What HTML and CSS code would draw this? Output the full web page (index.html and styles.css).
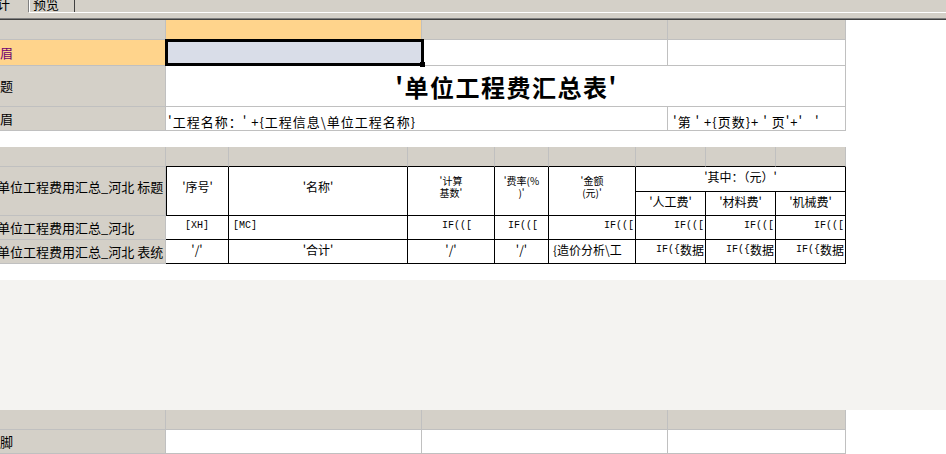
FILE: index.html
```html
<!DOCTYPE html>
<html lang="zh-CN">
<head>
<meta charset="utf-8">
<title>单位工程费汇总表</title>
<link rel="stylesheet" href="styles.css">
</head>
<body>
<div class="tabs">
  <div class="tab tab-active"><span class="tab-label tab-label-cut">计</span></div>
  <div class="tab tab-idle"><span class="tab-label">预览</span></div>
  <div class="tab-rest"></div>
</div>
<div class="rule">
  <div class="rule-hl"></div>
  <div class="rule-sp"></div>
  <div class="rule-d1"></div>
  <div class="rule-d2"></div>
</div>

<div class="band">
  <div class="grid g1">
    <div class="rh hd"></div>
    <div class="ch ch-sel"></div>
    <div class="ch"></div>
    <div class="ch"></div>

    <div class="rh rh-sel">眉</div>
    <div class="c c-sel"></div>
    <div class="c"></div>
    <div class="c"></div>

    <div class="rh">题</div>
    <div class="c c-title">'单位工程费汇总表'</div>

    <div class="rh">眉</div>
    <div class="c c-text span2">'工程名称：' +{工程信息\单位工程名称}</div>
    <div class="c c-text c-page">'第 ' +{页数}+ ' 页'+'   '</div>

    <div class="selbox"><span class="handle"></span></div>
  </div>
</div>

<div class="gap"></div>

<div class="band">
  <div class="grid g2">
    <div class="rh hd"></div>
    <div class="ch"></div>
    <div class="ch"></div>
    <div class="ch"></div>
    <div class="ch"></div>
    <div class="ch"></div>
    <div class="ch"></div>
    <div class="ch"></div>
    <div class="ch"></div>

    <div class="rh rh-cut rspan2 rh-top">单位工程费用汇总_河北 标题</div>
    <div class="d tall rspan2">'序号'</div>
    <div class="d tall rspan2">'名称'</div>
    <div class="d tall rspan2 two">'计算<br>基数'</div>
    <div class="d tall rspan2 two">'费率(%<br>)'</div>
    <div class="d tall rspan2 two">'金额<br>(元)'</div>
    <div class="d span3">'其中：（元）'</div>
    <div class="d">'人工费'</div>
    <div class="d">'材料费'</div>
    <div class="d">'机械费'</div>

    <div class="rh rh-cut">单位工程费用汇总_河北</div>
    <div class="d"><span class="a">[XH]</span></div>
    <div class="d al"><span class="a">[MC]</span></div>
    <div class="d ar pr22"><span class="a">IF(([</span></div>
    <div class="d ar pr10"><span class="a">IF(([</span></div>
    <div class="d ar"><span class="a">IF(([</span></div>
    <div class="d ar"><span class="a">IF(([</span></div>
    <div class="d ar"><span class="a">IF(([</span></div>
    <div class="d ar"><span class="a">IF(([</span></div>

    <div class="rh rh-cut">单位工程费用汇总_河北 表统</div>
    <div class="d">'/'</div>
    <div class="d">'合计'</div>
    <div class="d">'/'</div>
    <div class="d">'/'</div>
    <div class="d al">{造价分析\工</div>
    <div class="d ar"><span class="a">IF({</span>数据</div>
    <div class="d ar"><span class="a">IF({</span>数据</div>
    <div class="d ar"><span class="a">IF({</span>数据</div>
  </div>
</div>

<div class="gap"></div>
<div class="empty"></div>

<div class="band">
  <div class="grid g3">
    <div class="rh hd"></div>
    <div class="ch"></div>
    <div class="ch"></div>
    <div class="ch"></div>
    <div class="rh">脚</div>
    <div class="c"></div>
    <div class="c"></div>
    <div class="c"></div>
  </div>
</div>
</body>
</html>
```

FILE: styles.css
```css
* {
  box-sizing: border-box;
  margin: 0;
  padding: 0;
}

html,
body {
  width: 946px;
  height: 454px;
  overflow: hidden;
  background: #fff;
}

body {
  font-family: "Noto Sans CJK SC", "Noto Sans", sans-serif;
  font-size: 12px;
  color: #000;
}

/* ---------- tab strip ---------- */
.tabs {
  height: 12px;
  display: flex;
  background: #d4d0c8;
  overflow: hidden;
}

.tab {
  height: 12px;
  overflow: hidden;
  font-size: 13px;
  line-height: 13px;
}

.tab-active {
  width: 29px;
  border-right: 1px solid #808080;
}

.tab-idle {
  width: 46px;
  padding-left: 3px;
  border-left: 1px solid #fff;
  border-right: 1px solid #404040;
}

.tab-label {
  display: block;
  margin-top: -3px;
  white-space: nowrap;
}

.tab-label-cut {
  margin-left: -3px;
}

.tab-rest {
  flex: 1;
}

.rule {
  height: 8px;
  display: flex;
  flex-direction: column;
  background: #d4d0c8;
}

.rule-hl {
  height: 1px;
  margin-left: 29px;
  background: #fff;
}

.rule-sp {
  flex: 1;
}

.rule-d1 {
  height: 1px;
  background: #808080;
}

.rule-d2 {
  height: 1px;
  background: #404040;
}

/* ---------- bands ---------- */
.band {
  display: flex;
  background: #fff;
}

.grid {
  display: grid;
  width: 846px;
  position: relative;
}

.g1 {
  grid-template-columns: 166px 256px 246px 178px;
  grid-template-rows: 20px 26px 41px 24px;
}

.g2 {
  grid-template-columns: 166px 63px 179px 87px 54px 87px 70px 70px 70px;
  grid-template-rows: 20px 25px 24px 24px 24px;
}

.g3 {
  grid-template-columns: 166px 256px 246px 178px;
  grid-template-rows: 20px 24px;
}

.gap {
  height: 16px;
}

.empty {
  height: 130px;
  background: #f4f3f1;
}

/* row headers */
.rh {
  background: #d4d0c8;
  border-right: 1px solid #c0c0c0;
  border-bottom: 1px solid #c0c0c0;
  font-size: 13px;
  line-height: 16px;
  display: flex;
  align-items: center;
  white-space: pre;
  overflow: hidden;
}

.rh-sel {
  background: #ffd48c;
  color: #6e0070;
}

.rh-cut {
  margin-left: -3px;
}

.rh-top {
  align-items: flex-start;
  padding-top: 12px;
}

/* column headers */
.ch {
  background: #d4d0c8;
  border-right: 1px solid #c0c0c0;
  border-bottom: 1px solid #c0c0c0;
}

.ch-sel {
  background: #ffd48c;
}

.g2 .ch {
  border-bottom-color: #000;
}

/* plain cells */
.c {
  background: #fff;
  border-right: 1px solid #c0c0c0;
  border-bottom: 1px solid #c0c0c0;
  overflow: hidden;
  white-space: pre;
}

.c-sel {
  background: #d9dde8;
}

.c-title {
  grid-column: span 3;
  display: flex;
  align-items: center;
  justify-content: center;
  font-size: 24px;
  font-weight: 700;
  letter-spacing: 1.5px;
  padding-left: 2px;
}

.c-text {
  font-size: 13px;
  line-height: 16px;
  padding: 7px 0 0 2px;
  letter-spacing: 1px;
}

.c-page {
  padding-left: 5px;
}

.span2 {
  grid-column: span 2;
}

.span3 {
  grid-column: span 3;
}

.rspan2 {
  grid-row: span 2;
}

.selbox {
  position: absolute;
  left: 165px;
  top: 19px;
  width: 259px;
  height: 27px;
  border: 3px solid #000;
}

.handle {
  position: absolute;
  right: -4px;
  bottom: -4px;
  width: 5px;
  height: 5px;
  background: #000;
}

/* data cells (black grid) */
.d {
  background: #fff;
  border-right: 1px solid #000;
  border-bottom: 1px solid #000;
  display: flex;
  justify-content: center;
  align-items: flex-start;
  padding-top: 3px;
  line-height: 14px;
  white-space: nowrap;
  overflow: hidden;
}

.g2 .d:nth-child(11) {
  border-left: 1px solid #000;
}

.tall {
  align-items: center;
  padding-top: 0;
  padding-bottom: 8px;
}

.two {
  text-align: center;
  font-size: 10px;
  line-height: 12px;
  white-space: normal;
}

.al {
  justify-content: flex-start;
  padding-left: 4px;
}

.ar {
  justify-content: flex-end;
  padding-right: 1px;
}

.pr22 {
  padding-right: 22px;
}

.pr10 {
  padding-right: 10px;
}

.a {
  font-family: "Liberation Mono", monospace;
  font-size: 10px;
}
```
